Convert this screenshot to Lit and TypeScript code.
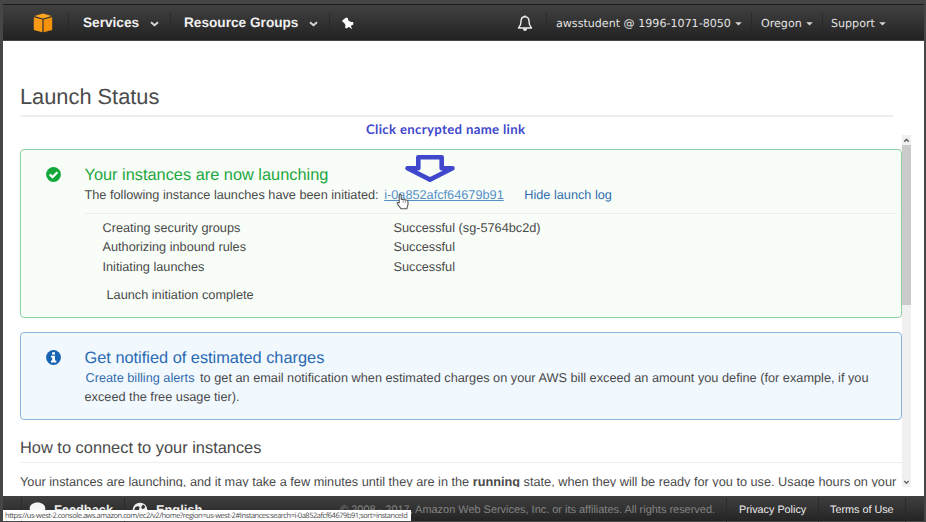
import { LitElement, html, css } from "lit";
import { customElement } from "lit/decorators.js";

const steps = [
  { name: "Creating security groups", result: "Successful (sg-5764bc2d)" },
  { name: "Authorizing inbound rules", result: "Successful" },
  { name: "Initiating launches", result: "Successful" },
];

const chevron = html`<svg class="chevron" width="9" height="6" viewBox="0 0 9 6">
  <path d="M1 1.2 L4.5 4.2 L8 1.2" fill="none" stroke="#d8d8d8" stroke-width="1.9" />
</svg>`;
const caret = html`<svg class="caret" width="7" height="4" viewBox="0 0 7 4">
  <path d="M0.2 0.2H6.8L3.5 3.6Z" fill="#d8d8d8" />
</svg>`;

@customElement("console-header")
export class ConsoleHeader extends LitElement {
  static styles = css`
    :host {
      display: flex;
      flex: none;
      box-sizing: border-box;
      height: 37px;
      padding-top: 1px;
      align-items: center;
      background: linear-gradient(#414141, #222);
      border-top: 1px solid #1c1c1c;
      border-bottom: 1px solid #454545;
      color: #f0f0f0;
    }
    .logo { margin-left: 30px; width: 20px; height: 20px; }
    .sep { width: 1px; height: 20px; background: #292929; flex: none; }
    .s1 { margin-left: 15px; }
    .menu { display: flex; align-items: center; font: bold 13.65px/18px "Liberation Sans", Arial, sans-serif; }
    .services { margin-left: 14px; width: 87px; }
    .groups { margin-left: 13px; width: 145px; }
    .menu .chevron { margin-top: 2px; margin-left: 10.5px; }
    .pin { margin-left: 12px; }
    .right { margin-left: auto; display: flex; align-items: center; font: 11.1px/18px "DejaVu Sans", Verdana, sans-serif; color: #e2e2e2; }
    .item { display: flex; align-items: center; gap: 4px; padding-top: 2px; box-sizing: border-box; white-space: nowrap; }
    .caret { margin-top: -1px; }
    .account { width: 204px; padding-left: 9px; }
    .region { width: 70px; padding-left: 9px; }
    .support { width: 101px; padding-left: 8px; }
    .bell { margin-right: 13px; margin-top: 1px; }
  `;
  render() {
    return html`
      <svg class="logo" viewBox="0 0 20 20">
        <path d="M10 0.6 L18.6 3 L10 5.5 L1.4 3Z" fill="#ffa51e" />
        <path d="M0.8 4.3 L9.4 6.6 V19.3 L0.8 17Z" fill="#fa9a14" />
        <path d="M19.2 4.3 L10.6 6.6 V19.3 L19.2 17Z" fill="#f5920a" />
      </svg>
      <span class="sep s1"></span>
      <div class="menu services">Services${chevron}</div>
      <span class="sep"></span>
      <div class="menu groups">Resource Groups${chevron}</div>
      <span class="sep"></span>
      <svg class="pin" width="12" height="13" viewBox="0 0 12 13">
        <path d="M4.1 0.4 L6 1.2 L6.1 3.3 L9 5 L11.1 5 L11.4 7.4 L8.9 8.8 L10 12.2 L6.8 9.8 L4.7 11.6 L3.1 10.8 L3.5 8.2 L1.9 5.5 L0.4 5.1 L0.5 3.2Z" fill="#fff" />
      </svg>
      <div class="right">
        <svg class="bell" width="16" height="17" viewBox="0 0 16 17">
          <path d="M8 1.8 C5 1.8 4 4 4 6.5 C4 10 3 11.3 1.5 13 H14.5 C13 11.3 12 10 12 6.5 C12 4 11 1.8 8 1.8Z" fill="none" stroke="#eee" stroke-width="1.4" stroke-linejoin="round" />
          <path d="M7.2 0.6 H8.8 V2 H7.2Z M5.8 13.4 H10.2 Q9.8 16 8 16 Q6.2 16 5.8 13.4Z" fill="#eee" />
        </svg>
        <span class="sep"></span>
        <div class="item account">awsstudent @ 1996-1071-8050${caret}</div>
        <span class="sep"></span>
        <div class="item region">Oregon${caret}</div>
        <span class="sep"></span>
        <div class="item support">Support${caret}</div>
      </div>
    `;
  }
}

@customElement("console-footer")
export class ConsoleFooter extends LitElement {
  static styles = css`
    :host {
      display: flex;
      flex: none;
      height: 26px;
      align-items: center;
      box-sizing: border-box;
      padding-top: 2px;
      background: linear-gradient(#404040, #242424);
      border-bottom: 1px solid #484848;
      font: 10.8px/14px "Liberation Sans", Arial, sans-serif;
      color: #ececec;
      white-space: nowrap;
      text-rendering: geometricPrecision;
    }
    .sep { width: 1px; height: 24px; background: #2a2a2a; flex: none; }
    .first { margin-left: 18px; }
    .strong { font-weight: bold; font-size: 12.8px; }
    .bubble { margin: 0 8px 0 7px; }
    .feedback { width: 70px; }
    .globe { margin: 0 8px 0 7px; }
    .copy { margin-left: auto; margin-right: 11px; color: #848484; font-size: 10.95px; }
    .privacy { width: 91px; padding-left: 12px; box-sizing: border-box; }
    .terms { width: 86px; padding-left: 11px; box-sizing: border-box; }
    .last { margin-right: 18px; }
  `;
  render() {
    return html`
      <span class="sep first"></span>
      <svg class="bubble" width="17" height="15" viewBox="0 0 17 15">
        <path d="M8.5 0.5 C13 0.5 16.3 3 16.3 6.5 C16.3 10 13 12.4 8.5 12.4 L4 14.5 L4.3 11.7 C2 10.6 0.7 8.8 0.7 6.5 C0.7 3 4 0.5 8.5 0.5Z" fill="#f4f4f4" />
      </svg>
      <span class="strong feedback">Feedback</span>
      <span class="sep"></span>
      <svg class="globe" width="16" height="16" viewBox="0 0 16 16">
        <circle cx="8" cy="8" r="7.3" fill="#f2f2f2" />
        <path d="M3 5.5 L5.5 4 L7.6 5 L7 8 L4.5 9 L2.3 8Z M9.2 5 L11 2.6 L13.2 4.4 L12.4 6.4 L10 7Z M6 10.5 L9 11.5 L7.5 14Z" fill="#353535" />
      </svg>
      <span class="strong">English</span>
      <span class="copy">© 2008 - 2017, Amazon Web Services, Inc. or its affiliates. All rights reserved.</span>
      <span class="sep"></span>
      <span class="privacy">Privacy Policy</span>
      <span class="sep"></span>
      <span class="terms">Terms of Use</span>
      <span class="sep last"></span>
    `;
  }
}

@customElement("app-root")
export class AppRoot extends LitElement {
  static styles = css`
    :host {
      display: block;
      position: relative;
      width: 926px;
      height: 522px;
      overflow: hidden;
      box-sizing: border-box;
      padding: 4px 2px 0 3px;
      background: #464646;
      text-rendering: geometricPrecision;
      font: 12.72px/19px "Liberation Sans", Arial, sans-serif;
      color: #4a4a4a;
    }
    .window { display: flex; flex-direction: column; height: 518px; background: #fff; }
    .page { flex: 1; min-height: 0; padding: 43px 0 0 17px; box-sizing: border-box; }
    .title { margin: 0; font-size: 21.8px; font-weight: normal; line-height: 25px; height: 31px; width: 873px; border-bottom: 2px solid #eee; }
    .viewport { display: flex; margin-top: 18px; height: 352px; width: 891px; overflow: hidden; }
    .scroll { width: 882px; flex: none; }
    .bar { width: 9px; background: #f0f0f0; display: flex; flex-direction: column; align-items: center; }
    .bar svg { flex: none; height: 10px; }
    .thumb { width: 9px; height: 160px; background: #cbcbcb; }
    .track { flex: 1; }
    .box { box-sizing: border-box; border: 1px solid; border-radius: 4px; display: flex; }
    .mark { flex: none; width: 15px; height: 15px; margin: 17px 23.5px 0 25px; }
    .ok { margin-top: 14px; height: 169px; border-color: #8fd0a2; background: #f8fdf8; }
    .info { margin-top: 14px; height: 88px; border-color: #8db4da; background: #f1f8fe; }
    .body { flex: 1; white-space: nowrap; }
    .head { margin: 15px 0 0; font-size: 16.35px; line-height: 20px; font-weight: normal; }
    .ok .head { color: #22a73f; }
    .info .head { color: #2a6ab3; }
    .link { color: #336dad; }
    .id { color: #5590c8; text-decoration: underline; margin: 0 17px 0 2px; }
    .log { border-top: 1px solid #e9eee9; margin: 7px 4px 0 0; padding: 4px 0 0 18px; }
    .lead { line-height: 20px; height: 21px; }
    .step { display: flex; line-height: 19.3px; }
    .name { width: 291px; }
    .done { margin: 9px 0 0 4px; }
    .alerts { margin: 0 2px 0 1px; }
    .note { line-height: 19px; font-size: 12.74px; }
    .sub { margin: 17px 0 0; font-size: 16.4px; line-height: 23px; height: 25px; font-weight: normal; border-bottom: 1px solid #eee; }
    .wait { margin: 9px 0 0; white-space: nowrap; }
    .callout { position: absolute; left: 366px; top: 121px; font: bold 13.2px/16px Lato, Carlito, sans-serif; letter-spacing: 0.33px; color: #3f48cc; white-space: nowrap; }
    .arrow { position: absolute; left: 404px; top: 154px; }
    .hand { position: absolute; left: 396px; top: 193px; }
    .status {
      position: absolute; left: 3px; top: 510px; width: 408px; height: 11px; box-sizing: border-box;
      padding-left: 2px; background: #fff; color: #4d4d4d; font: 7.5px/13px "Open Sans", sans-serif; letter-spacing: -0.465px; white-space: nowrap;
    }
  `;
  render() {
    return html`
      <div class="window">
        <console-header></console-header>
        <main class="page">
          <h1 class="title">Launch Status</h1>
          <div class="viewport">
            <div class="scroll">
              <section class="box ok">
                <svg class="mark" viewBox="0 0 15 15">
                  <circle cx="7.5" cy="7.5" r="7.4" fill="#14a83b" />
                  <path d="M3.7 7.4 L6.5 10.1 L11.4 5.2" fill="none" stroke="#fff" stroke-width="2.2" />
                </svg>
                <div class="body">
                  <h2 class="head">Your instances are now launching</h2>
                  <div class="lead">The following instance launches have been initiated: <a class="id">i-0a852afcf64679b91</a> <a class="link">Hide launch log</a></div>
                  <div class="log">
                    ${steps.map((s) => html`<div class="step"><span class="name">${s.name}</span><span>${s.result}</span></div>`)}
                    <div class="done">Launch initiation complete</div>
                  </div>
                </div>
              </section>
              <section class="box info">
                <svg class="mark" viewBox="0 0 15 15">
                  <circle cx="7.5" cy="7.5" r="7.4" fill="#1763b4" />
                  <path d="M6.1 2.3H9V4.6H6.1Z M5 5.8H9V10.6H10.3V12.4H5V10.6H6.2V7.5H5Z" fill="#fff" />
                </svg>
                <div class="body">
                  <h2 class="head">Get notified of estimated charges</h2>
                  <div class="note"><a class="link alerts">Create billing alerts</a> to get an email notification when estimated charges on your AWS bill exceed an amount you define (for example, if you<br />exceed the free usage tier).</div>
                </div>
              </section>
              <h2 class="sub">How to connect to your instances</h2>
              <p class="wait">Your instances are launching, and it may take a few minutes until they are in the <b>running</b> state, when they will be ready for you to use. Usage hours on your</p>
            </div>
            <div class="bar">
              <svg width="7" height="10" viewBox="0 0 7 10"><path d="M1.3 6.6 L3.5 4.4 L5.7 6.6" fill="none" stroke="#666" stroke-width="1.5" /></svg>
              <div class="thumb"></div>
              <div class="track"></div>
              <svg width="7" height="10" viewBox="0 0 7 10"><path d="M1.3 4 L3.5 6.2 L5.7 4" fill="none" stroke="#666" stroke-width="1.5" /></svg>
            </div>
          </div>
        </main>
        <console-footer></console-footer>
      </div>
      <div class="callout">Click encrypted name link</div>
      <svg class="arrow" width="52" height="29" viewBox="0 0 52 29">
        <path d="M14.3 3.2 H37.7 V14.3 H48.5 L26 25.6 L3.5 14.3 H14.3Z" fill="#f8fdf8" stroke="#3f48cc" stroke-width="4.6" stroke-linejoin="round" />
      </svg>
      <svg class="hand" width="13" height="17" viewBox="0 0 13 17">
        <path d="M3.2 1.8 Q4.2 0.8 5.2 1.8 V6.2 L10.5 7 Q12 7.3 12 8.8 V11.5 L10.8 15.8 H5 L1.2 10.6 Q1.2 9 3.2 9.8Z" fill="#fff" stroke="#555" stroke-width="1.1" />
        <path d="M7.2 7.2V9.6 M9.4 7.5V9.8" stroke="#777" stroke-width="0.8" />
      </svg>
      <div class="status">https://us-west-2.console.aws.amazon.com/ec2/v2/home?region=us-west-2#Instances:search=i-0a852afcf64679b91;sort=instanceId</div>
    `;
  }
}
